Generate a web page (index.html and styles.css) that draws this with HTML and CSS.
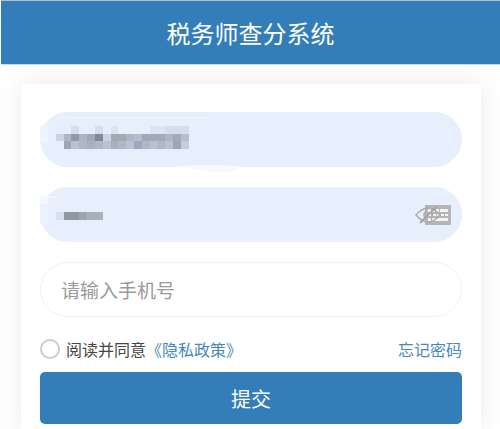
FILE: index.html
```html
<!DOCTYPE html>
<html lang="zh-CN">
<head>
    <meta charset="UTF-8">
    <meta name="viewport" content="width=device-width, initial-scale=1.0">
    <title>税务师查分系统</title>
    <link rel="stylesheet" href="styles.css">
</head>
<body>
    <header class="header">
        <h1 class="title">税务师查分系统</h1>
    </header>

    <main class="main">
        <form class="card">
            <div class="field filled">
                <input class="input" type="text" aria-label="用户名">
                <!-- masked account -->
                <svg class="mask" width="210" height="60" viewBox="0 0 210 60" aria-hidden="true">
                    <path d="M0 14h8v16h-8z" fill="#f0f5fd"/>
                    <path d="M18 5h152v2H14z" fill="#edf3fd"/>
                    <path d="M135 54q30-2 67 0q-5 6-18 6q-20 0-49-6z" fill="#f6f9fe"/>
                    <g transform="translate(15.7 13.7) scale(7.83)" shape-rendering="crispEdges">
                        <path d="M2 0h1v1h-1zM5 0h1v1h-1zM14 0h3v1h-3z" fill="#d6deed"/>
                        <path d="M7 0h1v1h-1zM12 0h2v1h-2z" fill="#dce4f3"/>
                        <path d="M0 1h1v1h-1zM6 1h1v1h-1z" fill="#cbd2e1"/>
                        <path d="M1 1h1v1h-1zM3 1h1v1h-1zM9 1h1v1h-1zM14 1h1v1h-1z" fill="#afb6c3"/>
                        <path d="M2 1h1v1h-1z" fill="#9497a4"/>
                        <path d="M4 1h1v1h-1zM7 1h2v1h-2zM11 1h3v1h-3zM15 1h1v1h-1z" fill="#a4aab5"/>
                        <path d="M5 1h1v1h-1z" fill="#838799"/>
                        <path d="M10 1h1v1h-1zM16 1h1v1h-1z" fill="#b3bed2"/>
                        <path d="M1 2h1v1h-1zM15 2h1v1h-1z" fill="#a0a7b2"/>
                        <path d="M2 2h1v1h-1zM6 2h1v1h-1zM9 2h1v1h-1zM12 2h1v1h-1zM14 2h1v1h-1z" fill="#b9c2d4"/>
                        <path d="M3 2h1v1h-1zM5 2h1v1h-1zM8 2h1v1h-1zM11 2h1v1h-1zM13 2h1v1h-1z" fill="#b1b8c5"/>
                        <path d="M4 2h1v1h-1zM7 2h1v1h-1z" fill="#a9b0be"/>
                        <path d="M10 2h1v1h-1z" fill="#9da7be"/>
                        <path d="M16 2h1v1h-1z" fill="#c3cddd"/>
                    </g>
                </svg>
            </div>

            <div class="field filled">
                <input class="input" type="password" aria-label="密码">
                <!-- masked password -->
                <svg class="mask" width="80" height="55" viewBox="0 0 80 55" aria-hidden="true">
                    <path d="M0 9h15v2H8v6H0z" fill="#f4f8fe"/>
                    <path d="M0 17h8v20H0z" fill="#ecf2fd"/>
                    <g transform="translate(15.7 24.7) scale(7.83)" shape-rendering="crispEdges">
                        <path d="M0 0h1v1h-1z" fill="#d9e0ee"/>
                        <path d="M1 0h2v1h-2z" fill="#9197a2"/>
                        <path d="M3 0h1v1h-1z" fill="#9ba6b3"/>
                        <path d="M4 0h2v1h-2z" fill="#a8b0bb"/>
                    </g>
                </svg>
                <button class="toggle" type="button" aria-label="显示密码">
                    <svg width="37" height="22" viewBox="0 0 37 22" aria-hidden="true">
                        <rect x="10" y="1" width="26" height="20" fill="#b5b5b5"/>
                        <path d="M13 5h3v3h-3zM17 5h3v3h-3zM21 5h3v3h-3zM25 5h8v3h-8zM13 10h3v2h-3zM18 10h3v2h-3zM22 10h3v2h-3zM26 10h3v2h-3zM30 10h3v2h-3zM13 14h3v3h-3zM17 14h16v3H17z" fill="#f4f4f4"/>
                        <path d="M1 11Q7 4 13 4T25 11Q19 18 13 18T1 11z" fill="none" stroke="#aaa" stroke-width="1.5"/>
                        <path d="M11 15Q7 11 11 7M16 8Q19 11 16 15" fill="none" stroke="#aaa" stroke-width="1.5"/>
                        <path d="M21 3L5 19" fill="none" stroke="#a5a5a5" stroke-width="2"/>
                    </svg>
                </button>
            </div>

            <div class="field">
                <input class="input" type="tel" placeholder="请输入手机号" aria-label="手机号">
            </div>

            <div class="options">
                <div class="agree">
                    <input class="check" type="checkbox" id="agree">
                    <label for="agree">阅读并同意</label><a class="link" href="#">《隐私政策》</a>
                </div>
                <a class="link" href="#">忘记密码</a>
            </div>

            <button class="submit" type="submit">提交</button>
        </form>
    </main>
</body>
</html>
```

FILE: styles.css
```css
* {
    margin: 0;
    padding: 0;
    box-sizing: border-box;
}

body {
    display: flex;
    flex-direction: column;
    min-height: 100vh;
    font-family: "Noto Sans CJK SC", sans-serif;
    font-size: 16px;
    color: #444;
    background: #fefefe;
}

.header {
    margin-left: 1px;
    padding: 14px 0;
    background: #337eb8;
    border-top: 1px solid #b4bfc7;
    border-bottom: 1px solid #c5dbeb;
    text-align: center;
}

.title {
    font-size: 24px;
    font-weight: 400;
    line-height: 35px;
    color: #fff;
}

.main {
    flex: 1;
    display: flex;
    flex-direction: column;
    padding: 19px 19px 0 21px;
    overflow: hidden;
}

.card {
    flex: 1;
    display: flex;
    flex-direction: column;
    padding: 28px 19px 5px;
    background: #fff;
    border-radius: 4px 4px 0 0;
    box-shadow: 0 0 20px rgba(0, 0, 0, 0.08);
}

.field {
    position: relative;
    margin-bottom: 20px;
}

.input {
    display: block;
    width: 100%;
    height: 55px;
    padding: 0 20px;
    font: inherit;
    font-size: 19px;
    color: #333;
    background: #fff;
    border: 1px solid #f2f2f2;
    border-radius: 28px;
    outline: none;
}

.input::placeholder {
    color: #999;
}

.filled .input {
    background: #e8effc;
    border-color: #e9effa;
}

.mask {
    position: absolute;
    top: 0;
    left: 0;
    pointer-events: none;
}

.toggle {
    position: absolute;
    top: 17px;
    right: 10px;
    height: 22px;
    background: none;
    border: none;
    cursor: pointer;
}

.options {
    display: flex;
    justify-content: space-between;
    align-items: center;
    margin-bottom: 11px;
    line-height: 24px;
}

.agree {
    display: flex;
    align-items: center;
}

.check {
    appearance: none;
    width: 20px;
    height: 20px;
    margin-right: 6px;
    background: #fff;
    border: 2px solid #ccc;
    border-radius: 50%;
}

.check:checked {
    background: #337eb8;
}

.link {
    color: #4688be;
    text-decoration: none;
}

.submit {
    height: 52px;
    font: inherit;
    font-size: 20px;
    color: #fff;
    background: #337eb8;
    border: none;
    border-radius: 5px;
    cursor: pointer;
}
```
